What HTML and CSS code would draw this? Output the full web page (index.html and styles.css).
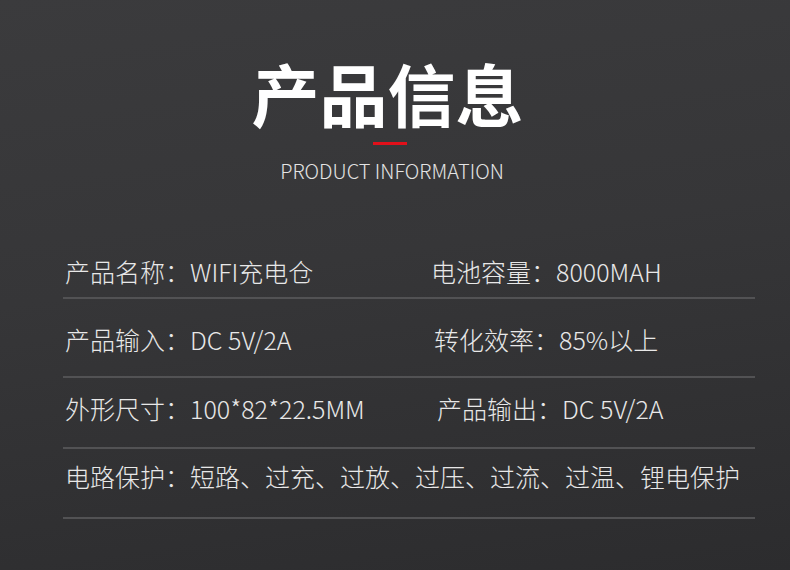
FILE: index.html
```html
<!DOCTYPE html>
<html lang="zh-CN">
<head>
<meta charset="utf-8">
<title>产品信息</title>
<link rel="stylesheet" href="styles.css">
</head>
<body>
<div class="page">
  <header class="head">
    <h1 class="title">产品信息</h1>
    <div class="accent"></div>
    <p class="subtitle">PRODUCT INFORMATION</p>
  </header>
  <section class="specs">
    <div class="row row-1">
      <span class="cell">产品名称：WIFI充电仓</span>
      <span class="cell">电池容量：8000MAH</span>
    </div>
    <div class="row row-2">
      <span class="cell">产品输入：DC 5V/2A</span>
      <span class="cell cell-r2">转化效率：85%以上</span>
    </div>
    <div class="row row-3">
      <span class="cell">外形尺寸：100*82*22.5MM</span>
      <span class="cell cell-r3">产品输出：DC 5V/2A</span>
    </div>
    <div class="row row-4">
      <span class="cell wide">电路保护：短路、过充、过放、过压、过流、过温、锂电保护</span>
    </div>
  </section>
</div>
</body>
</html>
```
FILE: styles.css
```css
* { box-sizing: border-box; }
html, body { margin: 0; padding: 0; }
body {
  width: 790px;
  height: 570px;
  overflow: hidden;
  background: linear-gradient(172deg, #3b3b3d 0%, #363638 45%, #2c2c2e 100%);
  font-family: "Noto Sans CJK SC", "Noto Sans", sans-serif;
  color: #e8e8e8;
}
.page {
  width: 790px;
  height: 570px;
  padding-top: 44px;
}
.head {
  display: flex;
  flex-direction: column;
  align-items: center;
}
.title {
  margin: 0;
  font-size: 68px;
  line-height: 98px;
  font-weight: 700;
  color: #ffffff;
  letter-spacing: 0;
  padding-right: 15px;
}
.accent {
  width: 34px;
  height: 3px;
  background: #e2101a;
  margin-right: 10px;
}
.subtitle {
  margin: 12px 6px 0 0;
  font-weight: 300;
  font-size: 20px;
  line-height: 28px;
  color: #e4e4e4;
}
.specs {
  margin: 71px 35px 0 63px;
}
.row {
  display: grid;
  grid-template-columns: 366px 1fr;
  border-bottom: 2px solid #525254;
  font-size: 25px;
  line-height: 30px;
  font-weight: 300;
}
.row-1 { padding: 0 0 11px 2px; }
.row-2 { padding: 25px 0 22px 2px; }
.row-3 { padding: 15px 0 24px 2px; }
.row-4 { padding: 12px 0 26px 2px; }
.cell { white-space: nowrap; }
.cell-r2 { padding-left: 3px; }
.cell-r3 { padding-left: 6px; }
.wide { grid-column: 1 / 3; }
```
